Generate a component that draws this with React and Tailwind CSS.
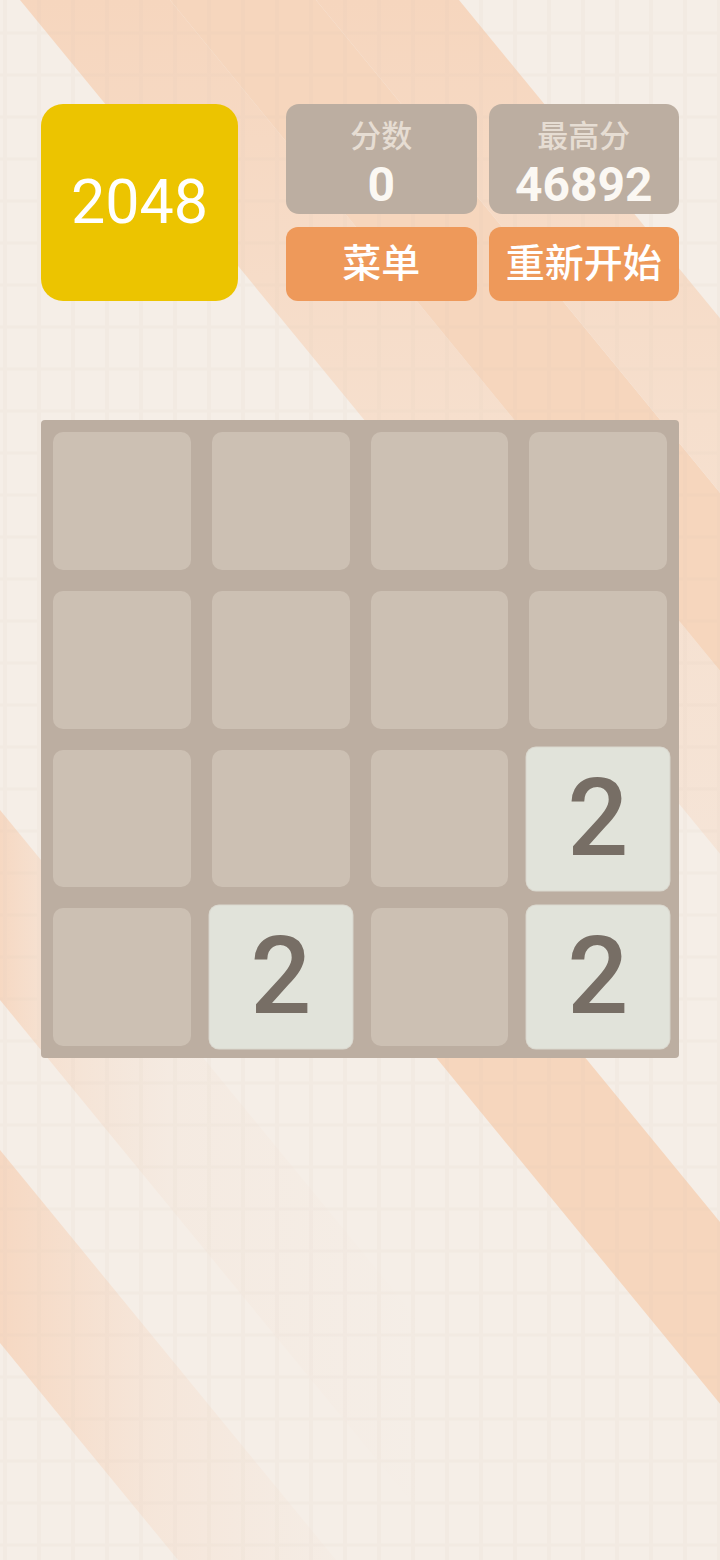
import React from 'react'

const FONT = { fontFamily: 'Roboto, "Noto Sans CJK SC", "Noto Sans", sans-serif' }

// 棋盘数据：0 = 空格
const BOARD = [
  [0, 0, 0, 0],
  [0, 0, 0, 0],
  [0, 0, 0, 2],
  [0, 2, 0, 2],
]

function Background() {
  const cols = Array.from({ length: 22 }, (_, i) => 5 + i * 34)
  const rows = Array.from({ length: 38 }, (_, i) => 33 + i * 42)
  return (
    <svg
      className="pointer-events-none absolute inset-0"
      width="720"
      height="1560"
      viewBox="0 0 720 1560"
    >
      <defs>
        <linearGradient id="fadeTop" gradientUnits="userSpaceOnUse" x1="0" y1="0" x2="0" y2="1000">
          <stop offset="0" stopColor="#f6d6be" />
          <stop offset="0.42" stopColor="#f6dfcd" />
          <stop offset="1" stopColor="#f5e6da" />
        </linearGradient>
        <linearGradient id="fadeD" gradientUnits="userSpaceOnUse" x1="0" y1="0" x2="420" y2="0">
          <stop offset="0" stopColor="#f6d8c2" stopOpacity="1" />
          <stop offset="0.1" stopColor="#f6dac5" stopOpacity="0.65" />
          <stop offset="0.4" stopColor="#f3dccb" stopOpacity="0.22" />
          <stop offset="1" stopColor="#f3dccb" stopOpacity="0" />
        </linearGradient>
        <linearGradient id="fadeE" gradientUnits="userSpaceOnUse" x1="0" y1="0" x2="340" y2="0">
          <stop offset="0" stopColor="#f6d8c2" stopOpacity="1" />
          <stop offset="0.45" stopColor="#f6dcc9" stopOpacity="0.45" />
          <stop offset="1" stopColor="#f3dfd0" stopOpacity="0.1" />
        </linearGradient>
      </defs>

      <rect width="720" height="1560" fill="#f5eee7" />

      {/* 斜条纹 */}
      <polygon points="20,0 170,0 1449,1560 1299,1560" fill="url(#fadeTop)" />
      <polygon points="170,0 316,0 1595,1560 1449,1560" fill="#f6d6bd" />
      <polygon points="316,0 459,0 1738,1560 1595,1560" fill="url(#fadeTop)" />
      <polygon points="307,900 456,900 997,1560 848,1560" fill="#f6d6bd" />
      <polygon points="0,810 615,1560 459,1560 0,1000" fill="url(#fadeD)" />
      <polygon points="0,1150 336,1560 178,1560 0,1343" fill="url(#fadeE)" />

      {/* 网格 */}
      <g fill="#dccbbb" opacity="0.09">
        {cols.map((x) => (
          <rect key={`c${x}`} x={x - 2} y="0" width="4" height="1560" />
        ))}
        {rows.map((y) => (
          <rect key={`r${y}`} x="0" y={y - 1.5} width="720" height="3" />
        ))}
      </g>
    </svg>
  )
}

function ScoreBox({ label, value }) {
  return (
    <div className="flex h-[110px] flex-col items-center rounded-[13px] bg-[#bcaea1] pt-[17px]">
      <span className="text-[31px] font-medium leading-none text-[#e6ddd3]">{label}</span>
      <span className="mt-[9px] text-[48px] font-bold leading-none text-[#fbf8f3]">{value}</span>
    </div>
  )
}

function ActionButton({ children }) {
  return (
    <button className="flex h-[74px] items-center justify-center rounded-[12px] bg-[#ee995a] text-[39px] font-medium leading-none text-white">
      {children}
    </button>
  )
}

function Tile({ value }) {
  if (!value) {
    return <div className="aspect-square rounded-[10px] bg-[#ccc0b3]" />
  }
  return (
    <div className="flex aspect-square scale-[1.035] items-center justify-center rounded-[9px] bg-[#e1e3da] shadow-[0_0_0_1px_#dad8cf]">
      <span className="text-[104px] font-medium leading-none text-[#776e65]">{value}</span>
    </div>
  )
}

export default function App() {
  return (
    <div className="relative h-[1560px] w-full overflow-hidden bg-[#f5eee7]" style={FONT}>
      <Background />

      <div className="relative px-[41px] pt-[104px]">
        <header className="flex items-start gap-[48px]">
          <div className="flex h-[197px] w-[197px] items-center justify-center rounded-[22px] bg-[#ecc400]">
            <span className="text-[61px] leading-none text-white">2048</span>
          </div>

          <div className="grid w-[393px] grid-cols-2 gap-x-[12px] gap-y-[13px]">
            <ScoreBox label="分数" value="0" />
            <ScoreBox label="最高分" value="46892" />
            <ActionButton>菜单</ActionButton>
            <ActionButton>重新开始</ActionButton>
          </div>
        </header>

        <div className="mt-[119px] grid w-[638px] grid-cols-4 gap-[21px] rounded-[4px] bg-[#bcaea1] p-[12px]">
          {BOARD.flat().map((v, i) => (
            <Tile key={i} value={v} />
          ))}
        </div>
      </div>
    </div>
  )
}
